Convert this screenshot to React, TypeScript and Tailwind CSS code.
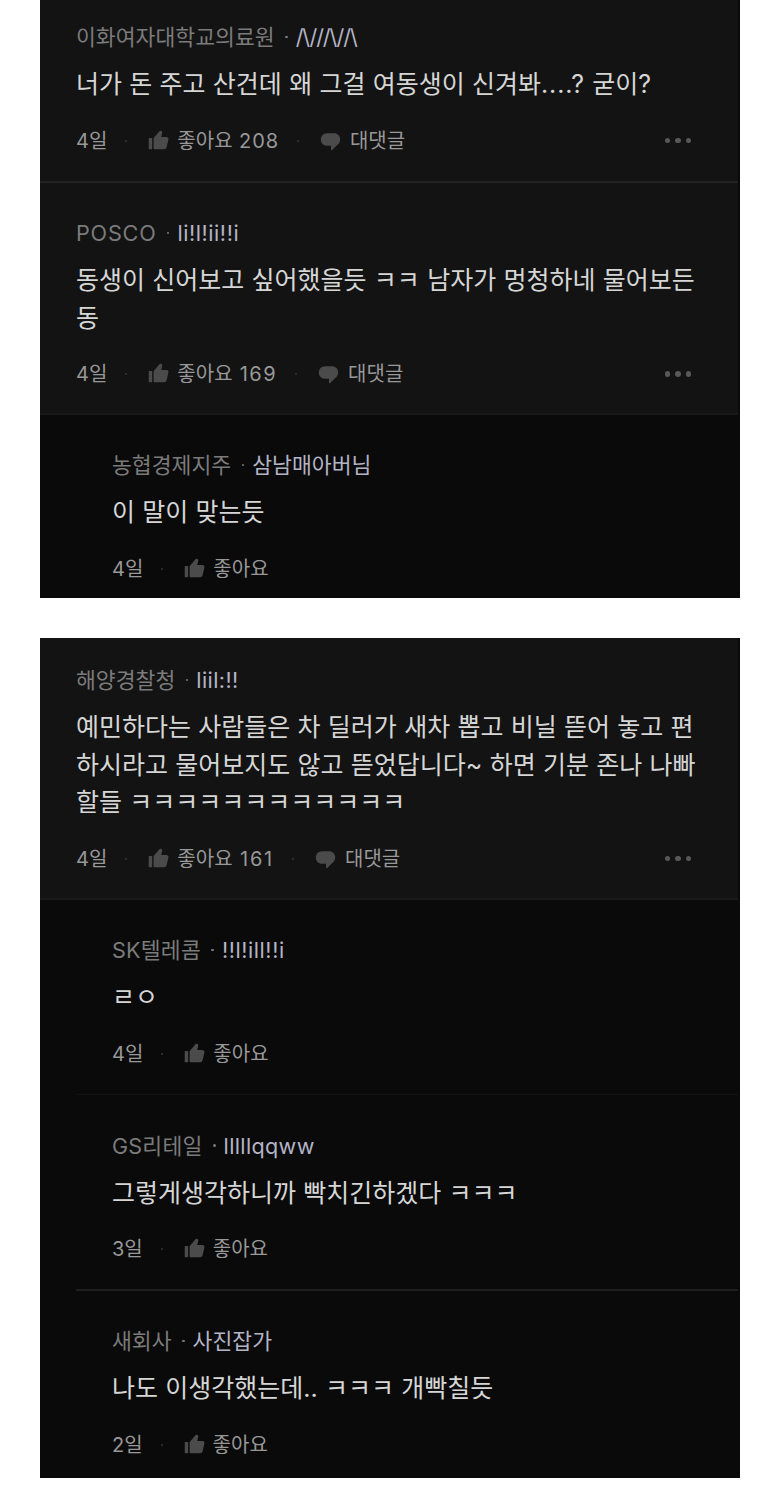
import type { ReactNode } from "react";

type Comment = {
  company: string;
  companyTracking?: string;
  nickname: string;
  nicknameTracking?: string;
  lines: ReactNode[];
  age: string;
  likes?: number;
  likesTracking?: string;
  reply?: boolean;
};

const firstThread: Comment[] = [
  {
    company: "이화여자대학교의료원",
    nickname: "/\\///\\//\\",
    nicknameTracking: "tracking-[-1.1px]",
    lines: [
      <>
        너가 돈 주고 산건데 왜 그걸 여동생이 신겨봐<span className="tracking-[0.9px]">....?</span> 굳이?
      </>,
    ],
    age: "4일",
    likes: 208,
    likesTracking: "tracking-[0.9px]",
  },
  {
    company: "POSCO",
    companyTracking: "tracking-[0.8px]",
    nickname: "li!l!ii!!i",
    nicknameTracking: "tracking-[0.55px]",
    lines: ["동생이 신어보고 싶어했을듯 ㅋㅋ 남자가 멍청하네 물어보든", "동"],
    age: "4일",
    likes: 169,
    likesTracking: "tracking-[1.5px]",
  },
  {
    company: "농협경제지주",
    nickname: "삼남매아버님",
    lines: ["이 말이 맞는듯"],
    age: "4일",
    reply: true,
  },
];

const secondThread: Comment[] = [
  {
    company: "해양경찰청",
    nickname: "liil:!!",
    nicknameTracking: "tracking-[0.4px]",
    lines: [
      "예민하다는 사람들은 차 딜러가 새차 뽑고 비닐 뜯어 놓고 편",
      "하시라고 물어보지도 않고 뜯었답니다~ 하면 기분 존나 나빠",
      "할들 ㅋㅋㅋㅋㅋㅋㅋㅋㅋㅋㅋㅋ",
    ],
    age: "4일",
    likes: 161,
    likesTracking: "tracking-[1.8px]",
  },
  {
    company: "SK텔레콤",
    companyTracking: "tracking-[0.2px]",
    nickname: "!!l!ill!!i",
    nicknameTracking: "tracking-[0.55px]",
    lines: ["ㄹㅇ"],
    age: "4일",
    reply: true,
  },
  {
    company: "GS리테일",
    companyTracking: "tracking-[0.2px]",
    nickname: "lllllqqww",
    nicknameTracking: "tracking-[0.35px]",
    lines: ["그렇게생각하니까 빡치긴하겠다 ㅋㅋㅋ"],
    age: "3일",
    reply: true,
  },
  {
    company: "새회사",
    nickname: "사진잡가",
    lines: ["나도 이생각했는데.. ㅋㅋㅋ 개빡칠듯"],
    age: "2일",
    reply: true,
  },
];

function ThumbIcon() {
  return (
    <svg viewBox="0 0 21 20" className="mb-[2px] h-5 w-[21px] shrink-0 fill-[#4b4b4b]">
      <path d="M.8 8h2.7c.4 0 .7.3.7.7v9.8c0 .4-.3.7-.7.7H1.500A.8.8 0 0 1 .7 18.400Z" />
      <path d="M5.600 8.900c0-.5.2-.9.500-1.300L11.700 1.100c.5-.6 1.300-.6 1.900-.1.600.5.800 1.200.6 1.900L13.200 7h5.300c1.400 0 2.200 1.200 1.900 2.500l-1.800 7.700c-.3 1.200-1.200 2-2.400 2H6.600c-.6 0-1-.4-1-1Z" />
    </svg>
  );
}

function BubbleIcon() {
  return (
    <svg viewBox="0 0 21 20" className="h-5 w-[21px] shrink-0 fill-[#4b4b4b]">
      <path d="M7.200 2.200h6.600c3.700 0 6.400 2.600 6.400 6 0 3-1.500 5-3.800 6.600l-4.100 4.200c-.5.5-1.300.2-1.300-.5v-3.700H7.200C3.500 14.800.8 11.900.8 8.500s2.700-6.300 6.400-6.300Z" />
    </svg>
  );
}

function MetaDot() {
  return <span className="ml-[18px] mr-[21px] size-[2px] shrink-0 rounded-full bg-[#333333]" />;
}

function MoreButton() {
  return (
    <button type="button" aria-label="더보기" className="ml-auto mr-[47px] flex gap-[5px]">
      <span className="size-[5.500px] rounded-full bg-[#585858]" />
      <span className="size-[5.500px] rounded-full bg-[#585858]" />
      <span className="size-[5.500px] rounded-full bg-[#585858]" />
    </button>
  );
}

function CommentBody({ comment }: { comment: Comment }) {
  return (
    <>
      <div className="flex h-[30px] items-center whitespace-pre text-[21.600px] leading-[30px]">
        <span className={`text-[#7b7b7b] ${comment.companyTracking ?? ""}`}>{comment.company}</span>
        <span className="ml-[10.500px] mr-2 size-[2.500px] rounded-full bg-[#7b7b7b]" />
        <span className={`text-[#b4b4c6] ${comment.nicknameTracking ?? ""}`}>{comment.nickname}</span>
      </div>
      <div className="mt-[14px] whitespace-pre text-[25px] leading-[37.500px] text-[#d6d6d6] [word-spacing:0.25px]">
        {comment.lines.map((line, i) => (
          <p key={i}>{line}</p>
        ))}
      </div>
      <div className="mt-[22px] flex h-[30px] items-center whitespace-pre text-[20px] leading-[30px] text-[#989898]">
        <span>{comment.age}</span>
        <MetaDot />
        <ThumbIcon />
        <span className="ml-2">
          좋아요
          {comment.likes && <span className={comment.likesTracking}> {comment.likes}</span>}
        </span>
        {!comment.reply && (
          <>
            <MetaDot />
            <BubbleIcon />
            <span className="ml-[9px]">대댓글</span>
            <MoreButton />
          </>
        )}
      </div>
    </>
  );
}

export default function App() {
  return (
    <main className="flex h-[1500px] w-[780px] flex-col gap-10 bg-white px-10 font-['Inter','Noto_Sans_CJK_KR',sans-serif]">
      <section className="h-[598px] overflow-hidden bg-[#0a0a0a] pr-[2px]">
        <article className="h-[183px] border-b-2 border-[#232323] bg-[#131313] pl-9 pt-[22px]">
          <CommentBody comment={firstThread[0]} />
        </article>
        <article className="h-[232px] border-b-2 border-[#191919] bg-[#131313] pl-9 pt-[35px]">
          <CommentBody comment={firstThread[1]} />
        </article>
        <article className="pl-[72px] pt-[35px]">
          <CommentBody comment={firstThread[2]} />
        </article>
      </section>

      <section className="h-[840px] overflow-hidden bg-[#0a0a0a] pr-[2px]">
        <article className="h-[262px] border-b-2 border-[#191919] bg-[#131313] pl-9 pt-[27px]">
          <CommentBody comment={secondThread[0]} />
        </article>
        <article className="ml-9 h-[195px] border-b border-[#131313] pl-9 pt-[35px]">
          <CommentBody comment={secondThread[1]} />
        </article>
        <article className="ml-9 h-[196px] border-b-2 border-[#1f1f1f] pl-9 pt-[35.500px]">
          <CommentBody comment={secondThread[2]} />
        </article>
        <article className="ml-9 pl-9 pt-[35px]">
          <CommentBody comment={secondThread[3]} />
        </article>
      </section>
    </main>
  );
}
